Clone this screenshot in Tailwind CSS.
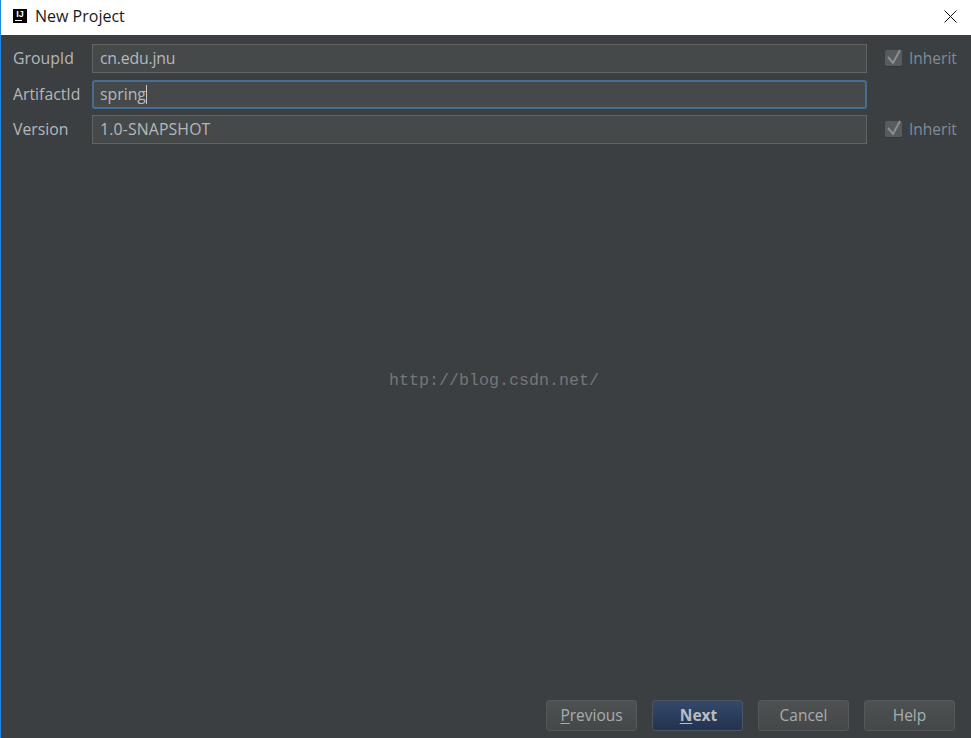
<!DOCTYPE html>
<html lang="en">
<head>
  <meta charset="UTF-8" />
  <title>New Project</title>
  <script src="https://cdn.jsdelivr.net/npm/@tailwindcss/browser@4"></script>
</head>
<body class="w-[971px] h-[738px] overflow-hidden bg-[#3c3f41] font-['Open_Sans',sans-serif]">
  <div class="relative flex flex-col h-full border-l border-l-[#1e88e5]">
    <!-- title bar -->
    <div class="flex items-center h-[35px] bg-white pl-[12px] pr-[14px]">
      <div class="relative w-[14px] h-[14px] -mt-[3px] bg-black flex justify-center">
        <span class="text-white text-[9px] leading-[11px] font-bold font-['Liberation_Sans',sans-serif]">IJ</span>
        <div class="absolute left-[2px] bottom-[2px] w-[7px] h-px bg-white"></div>
      </div>
      <span class="ml-[8px] -mt-[4px] text-[16px] text-[#1a1a1a]">New Project</span>
      <svg class="ml-auto -mt-[3px]" width="13" height="13" viewBox="0 0 13 13" fill="none" stroke="#111" stroke-width="1"><path d="M0.5 0.5 L12.5 12.5 M12.5 0.5 L0.5 12.5"/></svg>
    </div>

    <!-- form -->
    <div class="flex flex-col pt-[9px] pl-[12px] text-[15.8px] text-[#b4b8ba]">
      <div class="flex items-center h-[29px]">
        <label class="w-[79px] shrink-0">GroupId</label>
        <div class="w-[775px] shrink-0 h-[29px] flex items-center px-[7px] bg-[#45494a] border border-[#646464] tracking-[-0.2px]">cn.edu.jnu</div>
        <div class="flex items-center ml-[18px]">
          <div class="relative w-[17px] h-[17px] rounded-[2px] bg-[#585b5c] border-b border-b-[#333536]">
            <svg class="absolute -top-[2px] left-0" width="18" height="18" viewBox="0 0 18 18" fill="none" stroke="#8a8e90" stroke-width="2"><path d="M3 9 L8 15 L15 2"/></svg>
          </div>
          <span class="ml-[7px] text-[15.5px] text-[#7f8c96]">Inherit</span>
        </div>
      </div>
      <div class="flex items-center h-[29px] mt-[7px]">
        <label class="w-[79px] shrink-0">ArtifactId</label>
        <div class="w-[775px] shrink-0 h-[29px] flex items-center px-[7px] bg-[#45494a] border-2 border-[#466d94] rounded-[3px]">
          <span class="-ml-px">spring</span><span class="w-px h-[19px] bg-[#c8c8c8]"></span>
        </div>
      </div>
      <div class="flex items-center h-[29px] mt-[6px]">
        <label class="w-[79px] shrink-0">Version</label>
        <div class="w-[775px] shrink-0 h-[29px] flex items-center px-[7px] bg-[#45494a] border border-[#646464] tracking-[0.15px]">1.0-SNAPSHOT</div>
        <div class="flex items-center ml-[18px]">
          <div class="relative w-[17px] h-[17px] rounded-[2px] bg-[#585b5c] border-b border-b-[#333536]">
            <svg class="absolute -top-[2px] left-0" width="18" height="18" viewBox="0 0 18 18" fill="none" stroke="#8a8e90" stroke-width="2"><path d="M3 9 L8 15 L15 2"/></svg>
          </div>
          <span class="ml-[7px] text-[15.5px] text-[#7f8c96]">Inherit</span>
        </div>
      </div>
    </div>

    <!-- watermark -->
    <div class="absolute left-[388px] top-[369px] text-[16.67px] leading-[24px] text-[#747678] font-['Liberation_Mono',monospace]">http://blog.csdn.net/</div>

    <!-- buttons -->
    <div class="mt-auto flex justify-end gap-[15px] pr-[16px] pb-[7px] text-[15.5px]">
      <button class="w-[91px] h-[31px] rounded-[3px] border border-[#555859] bg-gradient-to-b from-[#4d5152] to-[#454849] text-[#a9adaf]"><span class="underline underline-offset-2">P</span>revious</button>
      <button class="w-[91px] h-[31px] rounded-[3px] border border-[#4a5562] bg-gradient-to-b from-[#34496a] to-[#233350] text-[#b8bdc2] font-bold pl-[2px]"><span class="underline underline-offset-2">N</span>ext</button>
      <button class="w-[91px] h-[31px] rounded-[3px] border border-[#555859] bg-gradient-to-b from-[#4d5152] to-[#454849] text-[#a9adaf]">Cancel</button>
      <button class="w-[91px] h-[31px] rounded-[3px] border border-[#555859] bg-gradient-to-b from-[#4d5152] to-[#454849] text-[#a9adaf]">Help</button>
    </div>
  </div>
</body>
</html>
